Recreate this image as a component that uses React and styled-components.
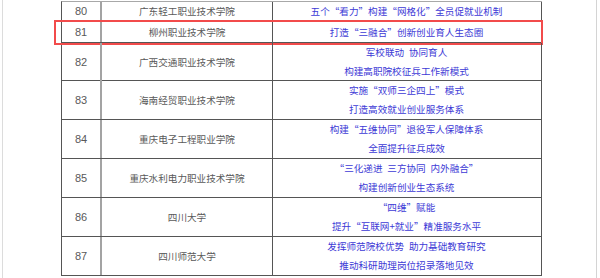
import React from "react";
import styled, { createGlobalStyle, css } from "styled-components";

const GlobalStyle = createGlobalStyle`
  html, body {
    margin: 0;
    padding: 0;
    background: #ffffff;
  }
  body {
    font-family: "Noto Sans CJK SC", "Noto Sans", sans-serif;
  }
`;

const Page = styled.div`
  width: 600px;
  height: 278px;
  box-sizing: border-box;
  padding-left: 2px;
  overflow: hidden;
  background: #fff;
`;

const Frame = styled.div`
  width: 595px;
  height: 278px;
  box-sizing: border-box;
  border-left: 1px solid #dcdcdc;
  border-right: 1px solid #d4d4d4;
  padding: 1px 0 0 58px;
`;

const Table = styled.div`
  width: 480px;
  border-left: 1px solid #555;
  border-top: 1px solid #a8a8a8;
`;

const Row = styled.div`
  position: relative;
  display: grid;
  grid-template-columns: 38px 2px 170px 1px 267px;
  height: ${({ $h }) => $h}px;
  border-bottom: 1px solid #555;
  border-right: 1px solid #555;

  ${({ $highlight }) =>
    $highlight &&
    css`
      &::after {
        content: "";
        position: absolute;
        left: -8px;
        top: -2px;
        width: 489px;
        height: 25px;
        box-sizing: border-box;
        border: 2px solid #f24b4b;
        pointer-events: none;
      }
    `}
`;

const Cell = styled.div`
  display: flex;
  flex-direction: column;
  align-items: center;
  justify-content: center;
  text-align: center;
  white-space: pre;
  color: ${({ $blue }) => ($blue ? "#3d3ad6" : "#595959")};
  font-size: 9.6px;
  line-height: 19px;
`;

const Num = styled(Cell)`
  font-family: "Liberation Sans", Arial, sans-serif;
  font-size: 11px;
`;

const Divider = styled.div`
  background: ${({ $light }) => ($light ? "#a3a3a3" : "#555")};
`;

// en space between phrases, as in the source document
const S = "\u2002";

const rows = [
  { no: 80, school: "广东轻工职业技术学院", items: ["五个“看力”构建“网格化”全员促就业机制"], h: 19 },
  { no: 81, school: "柳州职业技术学院", items: ["打造“三融合”创新创业育人生态圈"], h: 20, highlight: true },
  { no: 82, school: "广西交通职业技术学院", items: [`军校联动${S}协同育人`, "构建高职院校征兵工作新模式"], h: 37 },
  { no: 83, school: "海南经贸职业技术学院", items: ["实施“双师三企四上”模式", "打造高效就业创业服务体系"], h: 38 },
  { no: 84, school: "重庆电子工程职业学院", items: ["构建“五维协同”退役军人保障体系", "全面提升征兵成效"], h: 38 },
  { no: 85, school: "重庆水利电力职业技术学院", items: [`“三化递进${S}三方协同${S}内外融合”`, "构建创新创业生态系统"], h: 38 },
  { no: 86, school: "四川大学", items: ["“四维”赋能", "提升“互联网+就业”精准服务水平"], h: 38 },
  { no: 87, school: "四川师范大学", items: [`发挥师范院校优势${S}助力基础教育研究`, "推动科研助理岗位招录落地见效"], h: 38 },
];

export default function App() {
  return (
    <>
      <GlobalStyle />
      <Page>
        <Frame>
          <Table>
            {rows.map((r) => (
              <Row key={r.no} $h={r.h} $highlight={r.highlight}>
                <Num>{r.no}</Num>
                <Divider $light />
                <Cell>{r.school}</Cell>
                <Divider />
                <Cell $blue>
                  {r.items.map((t) => (
                    <span key={t}>{t}</span>
                  ))}
                </Cell>
              </Row>
            ))}
          </Table>
        </Frame>
      </Page>
    </>
  );
}
